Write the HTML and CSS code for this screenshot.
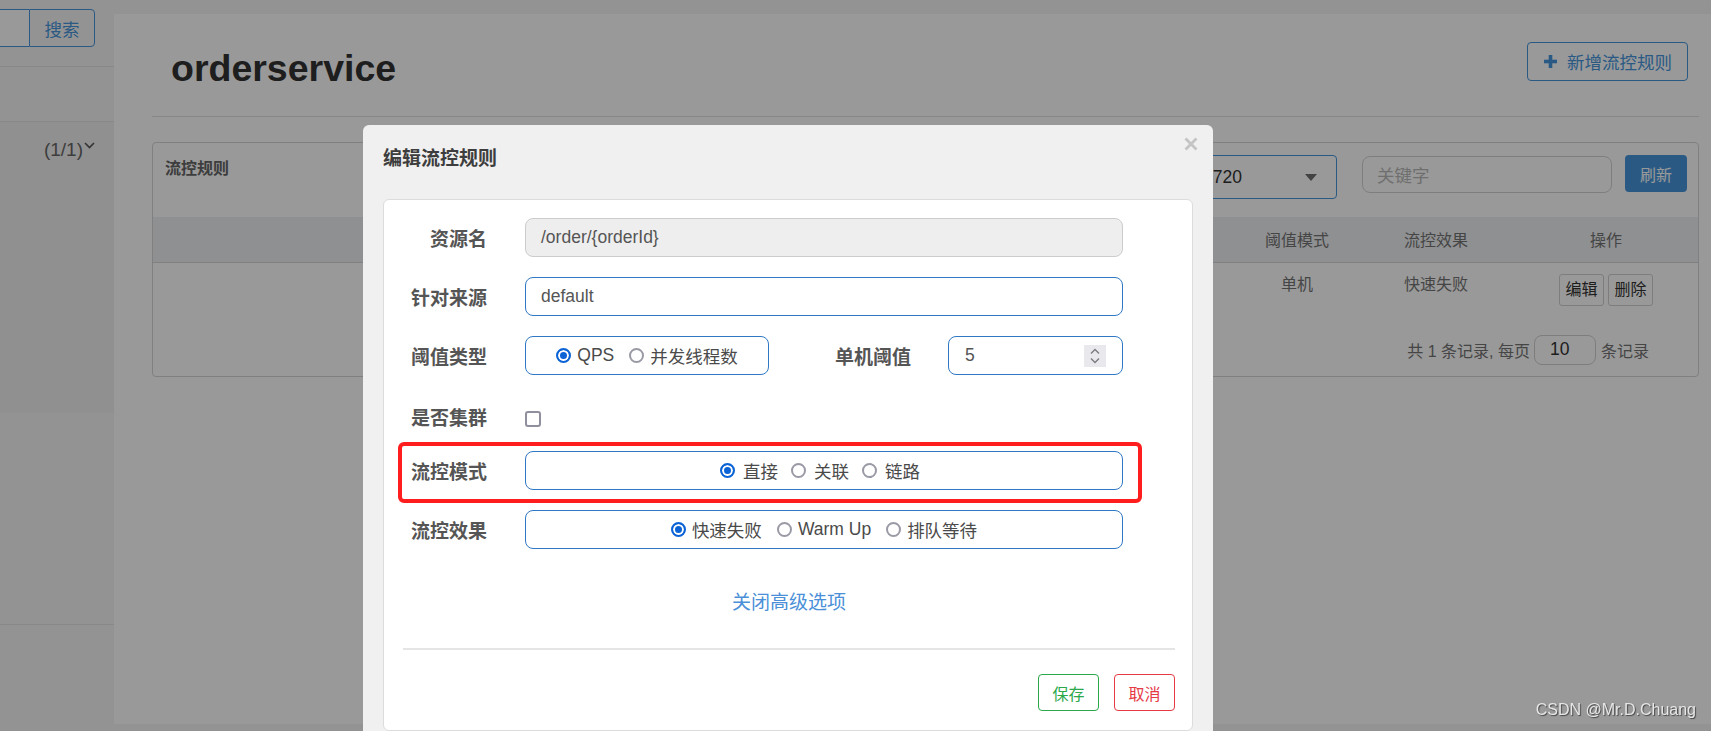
FILE: index.html
```html
<!DOCTYPE html>
<html lang="zh-CN">
<head>
<meta charset="utf-8">
<title>流控规则</title>
<link rel="stylesheet" href="styles.css">
</head>
<body>
<div class="app">
  <aside class="sidebar">
    <div class="search-group">
      <span class="search-input"></span>
      <span class="search-btn">搜索</span>
    </div>
    <div class="side-sep sep-a"></div>
    <div class="side-sep sep-b"></div>
    <div class="side-item">
      <span class="side-count">(1/1)</span>
      <svg class="chev" width="11" height="7" viewBox="0 0 11 7"><path d="M1 1 L5.5 5.5 L10 1" fill="none" stroke="#555" stroke-width="1.6"/></svg>
    </div>
    <div class="side-rest"></div>
  </aside>
  <main class="main">
    <div class="topbar"></div>
    <div class="content">
      <header class="page-head">
        <h1 class="page-title">orderservice</h1>
        <span class="btn-add">
          <svg width="13" height="13" viewBox="0 0 13 13"><rect x="4.7" y="0" width="3.6" height="13" fill="#4696dd"/><rect x="0" y="4.7" width="13" height="3.6" fill="#4696dd"/></svg>
          <span>新增流控规则</span>
        </span>
      </header>
      <section class="panel">
        <div class="panel-head">
          <span class="panel-title">流控规则</span>
          <div class="tools">
            <div class="machine-select">
              <span>localhost:8720</span>
              <svg width="12" height="7" viewBox="0 0 12 7"><polygon points="0,0 12,0 6,7" fill="#707070"/></svg>
            </div>
            <div class="keyword">关键字</div>
            <span class="btn-refresh">刷新</span>
          </div>
        </div>
        <table class="rules">
          <colgroup>
            <col class="c-spacer"><col class="c-mode"><col class="c-effect"><col class="c-action">
          </colgroup>
          <thead>
            <tr><th></th><th>阈值模式</th><th>流控效果</th><th>操作</th></tr>
          </thead>
          <tbody>
            <tr>
              <td></td>
              <td>单机</td>
              <td>快速失败</td>
              <td><div class="ops"><span class="btn-sm">编辑</span><span class="btn-sm">删除</span></div></td>
            </tr>
          </tbody>
        </table>
        <div class="pager">
          <span>共 1 条记录, 每页</span>
          <span class="page-size">10</span>
          <span>条记录</span>
        </div>
      </section>
    </div>
    <div class="footer-strip"></div>
  </main>
</div>

<div class="backdrop"></div>

<div class="modal">
  <div class="modal-head">
    <h4 class="modal-title">编辑流控规则</h4>
    <svg class="close" width="14" height="14" viewBox="0 0 14 14"><path d="M1.5 1.5 L12.5 12.5 M12.5 1.5 L1.5 12.5" stroke="#c4c4c4" stroke-width="2.8"/></svg>
  </div>
  <div class="card">
    <div class="form-row">
      <span class="label">资源名</span>
      <div class="field disabled">/order/{orderId}</div>
    </div>
    <div class="form-row">
      <span class="label">针对来源</span>
      <div class="field">default</div>
    </div>
    <div class="form-row">
      <span class="label">阈值类型</span>
      <div class="field radio-box narrow">
        <span class="opt"><span class="radio on"></span>QPS</span>
        <span class="opt"><span class="radio"></span>并发线程数</span>
      </div>
      <span class="label wide">单机阈值</span>
      <div class="field num">
        <span>5</span>
        <svg class="spin" width="22" height="22" viewBox="0 0 22 22"><rect width="22" height="22" fill="#e9e9ed"/><path d="M7 8.5 L11 4.5 L15 8.5" fill="none" stroke="#7a7a80" stroke-width="1.3"/><path d="M7 13.5 L11 17.5 L15 13.5" fill="none" stroke="#7a7a80" stroke-width="1.3"/></svg>
      </div>
    </div>
    <div class="form-row check-row">
      <span class="label">是否集群</span>
      <span class="checkbox"></span>
    </div>
    <div class="form-row">
      <span class="label">流控模式</span>
      <div class="field radio-box mode-box">
        <span class="opt"><span class="radio on"></span>直接</span>
        <span class="opt"><span class="radio"></span>关联</span>
        <span class="opt"><span class="radio"></span>链路</span>
      </div>
    </div>
    <div class="form-row">
      <span class="label">流控效果</span>
      <div class="field radio-box">
        <span class="opt"><span class="radio on"></span>快速失败</span>
        <span class="opt"><span class="radio"></span>Warm Up</span>
        <span class="opt"><span class="radio"></span>排队等待</span>
      </div>
    </div>
    <div class="adv-link">关闭高级选项</div>
    <div class="divider"></div>
    <div class="actions">
      <span class="btn-save">保存</span>
      <span class="btn-cancel">取消</span>
    </div>
  </div>
</div>

<div class="annot"></div>
<div class="watermark">CSDN @Mr.D.Chuang</div>
</body>
</html>
```

FILE: styles.css
```css
* { box-sizing: border-box; }
html, body { margin: 0; padding: 0; }
body {
  width: 1711px;
  height: 731px;
  overflow: hidden;
  position: relative;
  background: #fff;
  color: #333;
  font-family: "Liberation Sans", "Noto Sans CJK SC", sans-serif;
}

.app { display: flex; height: 731px; }

/* sidebar */
.sidebar {
  width: 114px;
  flex: none;
  background: #f5f5f5;
  padding-top: 9px;
  overflow: hidden;
}
.search-group { display: flex; width: 95px; height: 38px; }
.search-input {
  width: 29px;
  background: #fff;
  border-top: 1px solid #4696dd;
  border-bottom: 1px solid #4696dd;
}
.search-btn {
  width: 66px;
  border: 1px solid #4696dd;
  border-radius: 0 4px 4px 0;
  color: #4696dd;
  font-size: 17.5px;
  display: flex;
  align-items: center;
  justify-content: center;
}
.side-sep { height: 1px; background: #e3e3e3; }
.sep-a { margin-top: 19px; }
.sep-b { margin-top: 54px; }
.side-item {
  height: 291px;
  background: #f1f1f1;
  display: flex;
  justify-content: flex-end;
  align-items: flex-start;
  padding: 16px 19px 0 0;
}
.side-rest {
  height: 212px;
  border-bottom: 1px solid #e3e3e3;
}
.side-count { font-size: 19px; line-height: 24px; color: #666; }
.chev { margin: 4px 0 0 1px; }

/* main */
.main { flex: 1; display: flex; flex-direction: column; background: #fff; }
.topbar { height: 14px; background: #f5f5f5; flex: none; }
.content { flex: 1; padding: 0 12px 0 38px; }
.footer-strip { height: 7px; background: #f5f5f5; flex: none; }

.page-head {
  height: 103px;
  border-bottom: 1px solid #e1e1e1;
  display: flex;
  justify-content: space-between;
  align-items: flex-start;
}
.page-title {
  margin: 35px 0 0 19px;
  font-size: 37.5px;
  line-height: 38px;
  font-weight: bold;
  color: #333;
}
.btn-add {
  margin: 28px 11px 0 0;
  width: 161px;
  height: 39px;
  border: 1px solid #4696dd;
  border-radius: 4px;
  display: flex;
  align-items: center;
  padding-left: 16px;
  gap: 10px;
  color: #4696dd;
  font-size: 17.5px;
}
.btn-add svg { flex: none; }

.panel {
  margin-top: 25px;
  height: 235px;
  border: 1px solid #d5d5d5;
  border-radius: 4px;
  overflow: hidden;
}
.panel-head {
  height: 74px;
  display: flex;
  align-items: flex-start;
  padding: 12px 11px 0 12px;
}
.panel-title {
  margin-top: 2px;
  font-size: 16px;
  line-height: 24px;
  font-weight: bold;
  color: #666;
}
.tools { margin-left: auto; display: flex; align-items: flex-start; }
.machine-select {
  width: 221px;
  height: 44px;
  border: 1px solid #4696dd;
  border-radius: 4px;
  display: flex;
  align-items: center;
  justify-content: space-between;
  padding: 0 19px 0 12px;
  font-size: 17.5px;
  color: #333;
}
.keyword {
  margin: 1px 0 0 25px;
  width: 250px;
  height: 37px;
  border: 1px solid #d2d2d2;
  border-radius: 8px;
  padding-left: 14px;
  display: flex;
  align-items: center;
  font-size: 17.5px;
  color: #b9b9b9;
  background: #fff;
}
.btn-refresh {
  margin-left: 13px;
  width: 62px;
  height: 37px;
  background: #4696dd;
  border-radius: 4px;
  color: #fff;
  font-size: 16px;
  display: flex;
  align-items: center;
  justify-content: center;
}

.rules {
  width: 100%;
  border-collapse: collapse;
  table-layout: fixed;
  font-size: 16px;
  color: #747474;
}
.c-spacer { width: 1083px; }
.c-mode { width: 122px; }
.c-effect { width: 156px; }
.c-action { width: 184px; }
.rules th {
  height: 45px;
  padding: 0;
  background: #eef0f3;
  border-bottom: 1px solid #d5d5d5;
  font-weight: normal;
  text-align: center;
  vertical-align: middle;
}
.rules td {
  padding: 11px 0;
  text-align: center;
  vertical-align: top;
  line-height: 22px;
}
.ops { display: flex; justify-content: center; gap: 4px; }
.btn-sm {
  width: 45px;
  height: 32px;
  border: 1px solid #d1d1d1;
  border-radius: 3px;
  background: #fff;
  color: #333;
  font-size: 16px;
  display: flex;
  align-items: center;
  justify-content: center;
}
.pager {
  margin-top: 18px;
  height: 30px;
  display: flex;
  justify-content: flex-end;
  align-items: center;
  padding-right: 49px;
  font-size: 16px;
  color: #747474;
}
.page-size {
  width: 62px;
  height: 30px;
  margin: 0 5px 0 4px;
  border: 1px solid #d1d1d1;
  border-radius: 8px;
  padding-left: 15px;
  display: flex;
  align-items: center;
  font-size: 17.5px;
  color: #333;
}

/* overlay + modal */
.backdrop {
  position: fixed;
  inset: 0;
  background: rgba(0, 0, 0, 0.4);
}
.modal {
  position: absolute;
  left: 363px;
  top: 125px;
  width: 850px;
  height: 640px;
  background: #f0f0f0;
  border-radius: 6px;
}
.modal-head {
  height: 74px;
  display: flex;
  justify-content: space-between;
  align-items: flex-start;
  padding: 12px 15px 0 20px;
}
.modal-title {
  margin: 8px 0 0;
  font-size: 19px;
  line-height: 28px;
  font-weight: bold;
  color: #3d3d3d;
}
.card {
  margin: 0 20px;
  height: 532px;
  background: #fff;
  border: 1px solid #dcdcdc;
  border-radius: 6px;
  padding: 18px 17px 19px 19px;
  display: flex;
  flex-direction: column;
}
.form-row {
  display: flex;
  align-items: center;
  height: 39px;
  margin-bottom: 20px;
  flex: none;
}
.label {
  width: 84px;
  margin-right: 38px;
  flex: none;
  text-align: right;
  font-size: 19px;
  font-weight: bold;
  color: #555;
  white-space: nowrap;
}
.label.wide { width: 142px; margin-right: 37px; }
.field {
  width: 598px;
  height: 39px;
  border: 1px solid #2f78c4;
  border-radius: 8px;
  padding: 0 15px;
  display: flex;
  align-items: center;
  font-size: 17.5px;
  color: #555;
  flex: none;
}
.field.disabled { background: #eeeeee; border-color: #cccccc; }
.radio-box { justify-content: center; gap: 15px; color: #4a4a4a; }
.radio-box.narrow { width: 244px; }
.radio-box.mode-box { padding-right: 23px; gap: 13px; }
.mode-box .radio { margin-right: 8px; }
.field.num { width: 175px; padding: 0 16px; }
.spin { margin-left: auto; }
.opt { display: inline-flex; align-items: center; white-space: nowrap; }
.radio {
  width: 15px;
  height: 15px;
  margin-right: 6px;
  border-radius: 50%;
  border: 2px solid #9a9aa6;
  background: #fff;
  flex: none;
}
.radio.on {
  border-color: #0b63d6;
  background: #0b63d6;
  box-shadow: inset 0 0 0 2px #fff;
}
.check-row { height: 40px; margin-top: 1px; margin-bottom: 15px; }
.checkbox {
  width: 16px;
  height: 16px;
  border: 2px solid #8f8f9d;
  border-radius: 3px;
  background: #fff;
  margin-top: 6px;
}
.adv-link {
  margin-top: 22px;
  line-height: 24px;
  text-align: center;
  font-size: 19px;
  color: #4a8fd8;
}
.divider {
  margin-top: 33px;
  height: 2px;
  background: #e5e5e5;
  flex: none;
}
.actions {
  margin-top: 24px;
  display: flex;
  justify-content: flex-end;
  gap: 15px;
}
.btn-save, .btn-cancel {
  width: 61px;
  height: 37px;
  border: 1px solid;
  border-radius: 4px;
  background: #fff;
  font-size: 16px;
  display: flex;
  align-items: center;
  justify-content: center;
}
.btn-save { color: #2aa84a; border-color: #2aa84a; }
.btn-cancel { color: #e63946; border-color: #e63946; }

/* annotation + watermark overlays */
.annot {
  position: absolute;
  left: 398px;
  top: 442px;
  width: 744px;
  height: 61px;
  border: 4px solid #ff1d1d;
  border-radius: 6px;
}
.watermark {
  position: absolute;
  right: 15px;
  top: 700px;
  font-size: 16px;
  line-height: 20px;
  color: #e6e6e6;
  text-shadow: 1px 1px 1px rgba(0, 0, 0, 0.55);
}
```
